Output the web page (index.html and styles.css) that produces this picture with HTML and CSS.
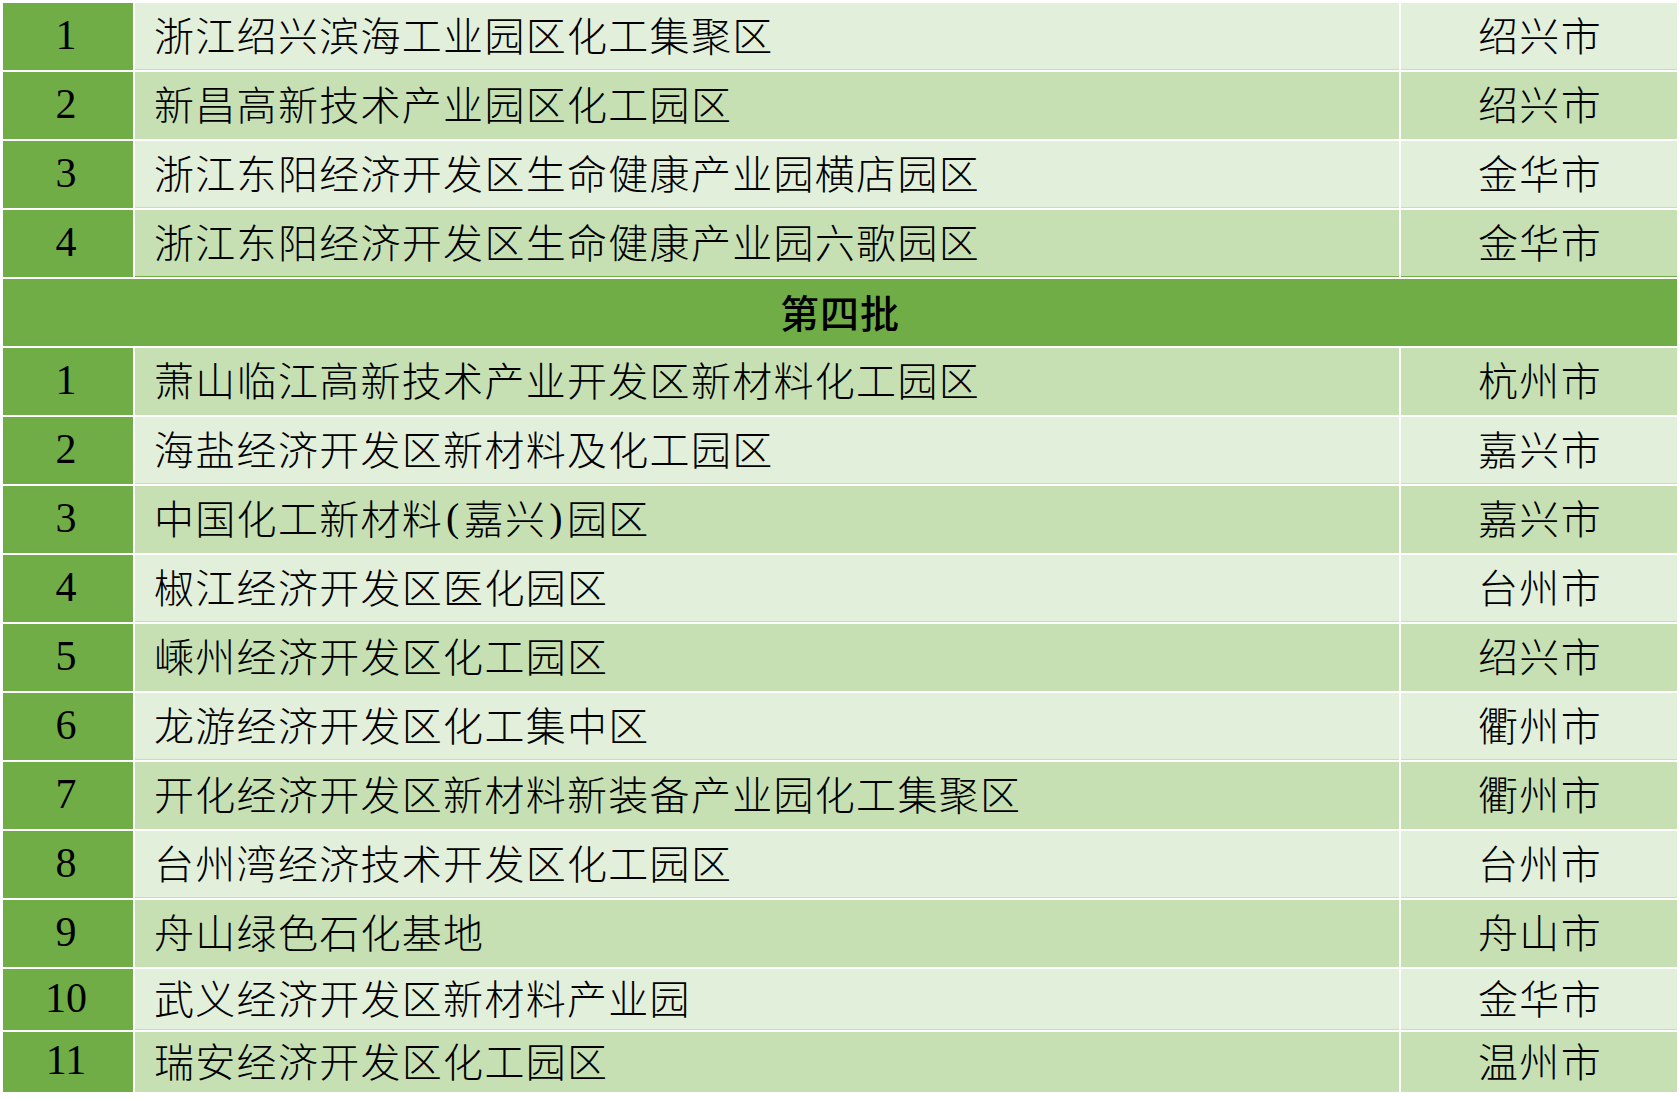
FILE: index.html
```html
<!DOCTYPE html>
<html lang="zh-CN">
<head>
<meta charset="utf-8">
<title>化工园区名单</title>
<link rel="stylesheet" href="styles.css">
</head>
<body>
<div class="table">
  <div class="num">1</div><div class="name light">浙江绍兴滨海工业园区化工集聚区</div><div class="city light">绍兴市</div>
  <div class="num">2</div><div class="name dark">新昌高新技术产业园区化工园区</div><div class="city dark">绍兴市</div>
  <div class="num">3</div><div class="name light">浙江东阳经济开发区生命健康产业园横店园区</div><div class="city light">金华市</div>
  <div class="num">4</div><div class="name dark pre">浙江东阳经济开发区生命健康产业园六歌园区</div><div class="city dark pre">金华市</div>
  <div class="batch">第四批</div>
  <div class="num">1</div><div class="name dark">萧山临江高新技术产业开发区新材料化工园区</div><div class="city dark">杭州市</div>
  <div class="num">2</div><div class="name light">海盐经济开发区新材料及化工园区</div><div class="city light">嘉兴市</div>
  <div class="num">3</div><div class="name dark">中国化工新材料<span class="paren">(</span>嘉兴<span class="paren">)</span>园区</div><div class="city dark">嘉兴市</div>
  <div class="num">4</div><div class="name light">椒江经济开发区医化园区</div><div class="city light">台州市</div>
  <div class="num">5</div><div class="name dark">嵊州经济开发区化工园区</div><div class="city dark">绍兴市</div>
  <div class="num">6</div><div class="name light">龙游经济开发区化工集中区</div><div class="city light">衢州市</div>
  <div class="num">7</div><div class="name dark">开化经济开发区新材料新装备产业园化工集聚区</div><div class="city dark">衢州市</div>
  <div class="num">8</div><div class="name light">台州湾经济技术开发区化工园区</div><div class="city light">台州市</div>
  <div class="num">9</div><div class="name dark">舟山绿色石化基地</div><div class="city dark">舟山市</div>
  <div class="num">10</div><div class="name light">武义经济开发区新材料产业园</div><div class="city light">金华市</div>
  <div class="num">11</div><div class="name dark">瑞安经济开发区化工园区</div><div class="city dark">温州市</div>
</div>
</body>
</html>
```

FILE: styles.css
```css
html, body {
  margin: 0;
  padding: 0;
  background: #ffffff;
}

body {
  font-family: "Liberation Serif", "Noto Sans CJK SC", serif;
  color: #000000;
}

.table {
  display: grid;
  grid-template-columns: 130px 1264px 276px;
  grid-template-rows: repeat(14, 67px) 61px 60px;
  gap: 2px;
  padding: 3px 0 0 3px;
}

.num {
  background: #70ad47;
  display: flex;
  align-items: center;
  justify-content: center;
  font-family: "Liberation Serif", serif;
  font-size: 42px;
  padding: 0 4px 4px 0;
}

.name, .city {
  display: flex;
  align-items: center;
  font-family: "Noto Sans CJK SC", sans-serif;
  font-weight: 300;
  font-size: 40px;
  letter-spacing: 1.3px;
  box-sizing: border-box;
  padding-bottom: 5px;
}

.name {
  padding-left: 19px;
}

.city {
  justify-content: center;
  padding-left: 2px;
}

.light {
  background: #e2efda;
  border-bottom: 1px solid #c6e0b4;
}

.dark {
  background: #c6e0b4;
}

.pre {
  border-bottom: 1px solid #70ad47;
}

.paren {
  font-family: "Liberation Serif", serif;
  padding: 0 3px;
}

.batch {
  grid-column: 1 / span 3;
  background: #70ad47;
  display: flex;
  align-items: center;
  justify-content: center;
  font-family: "Noto Sans CJK SC", sans-serif;
  font-weight: 500;
  font-size: 39px;
  letter-spacing: 1px;
  padding-bottom: 4px;
}
```
